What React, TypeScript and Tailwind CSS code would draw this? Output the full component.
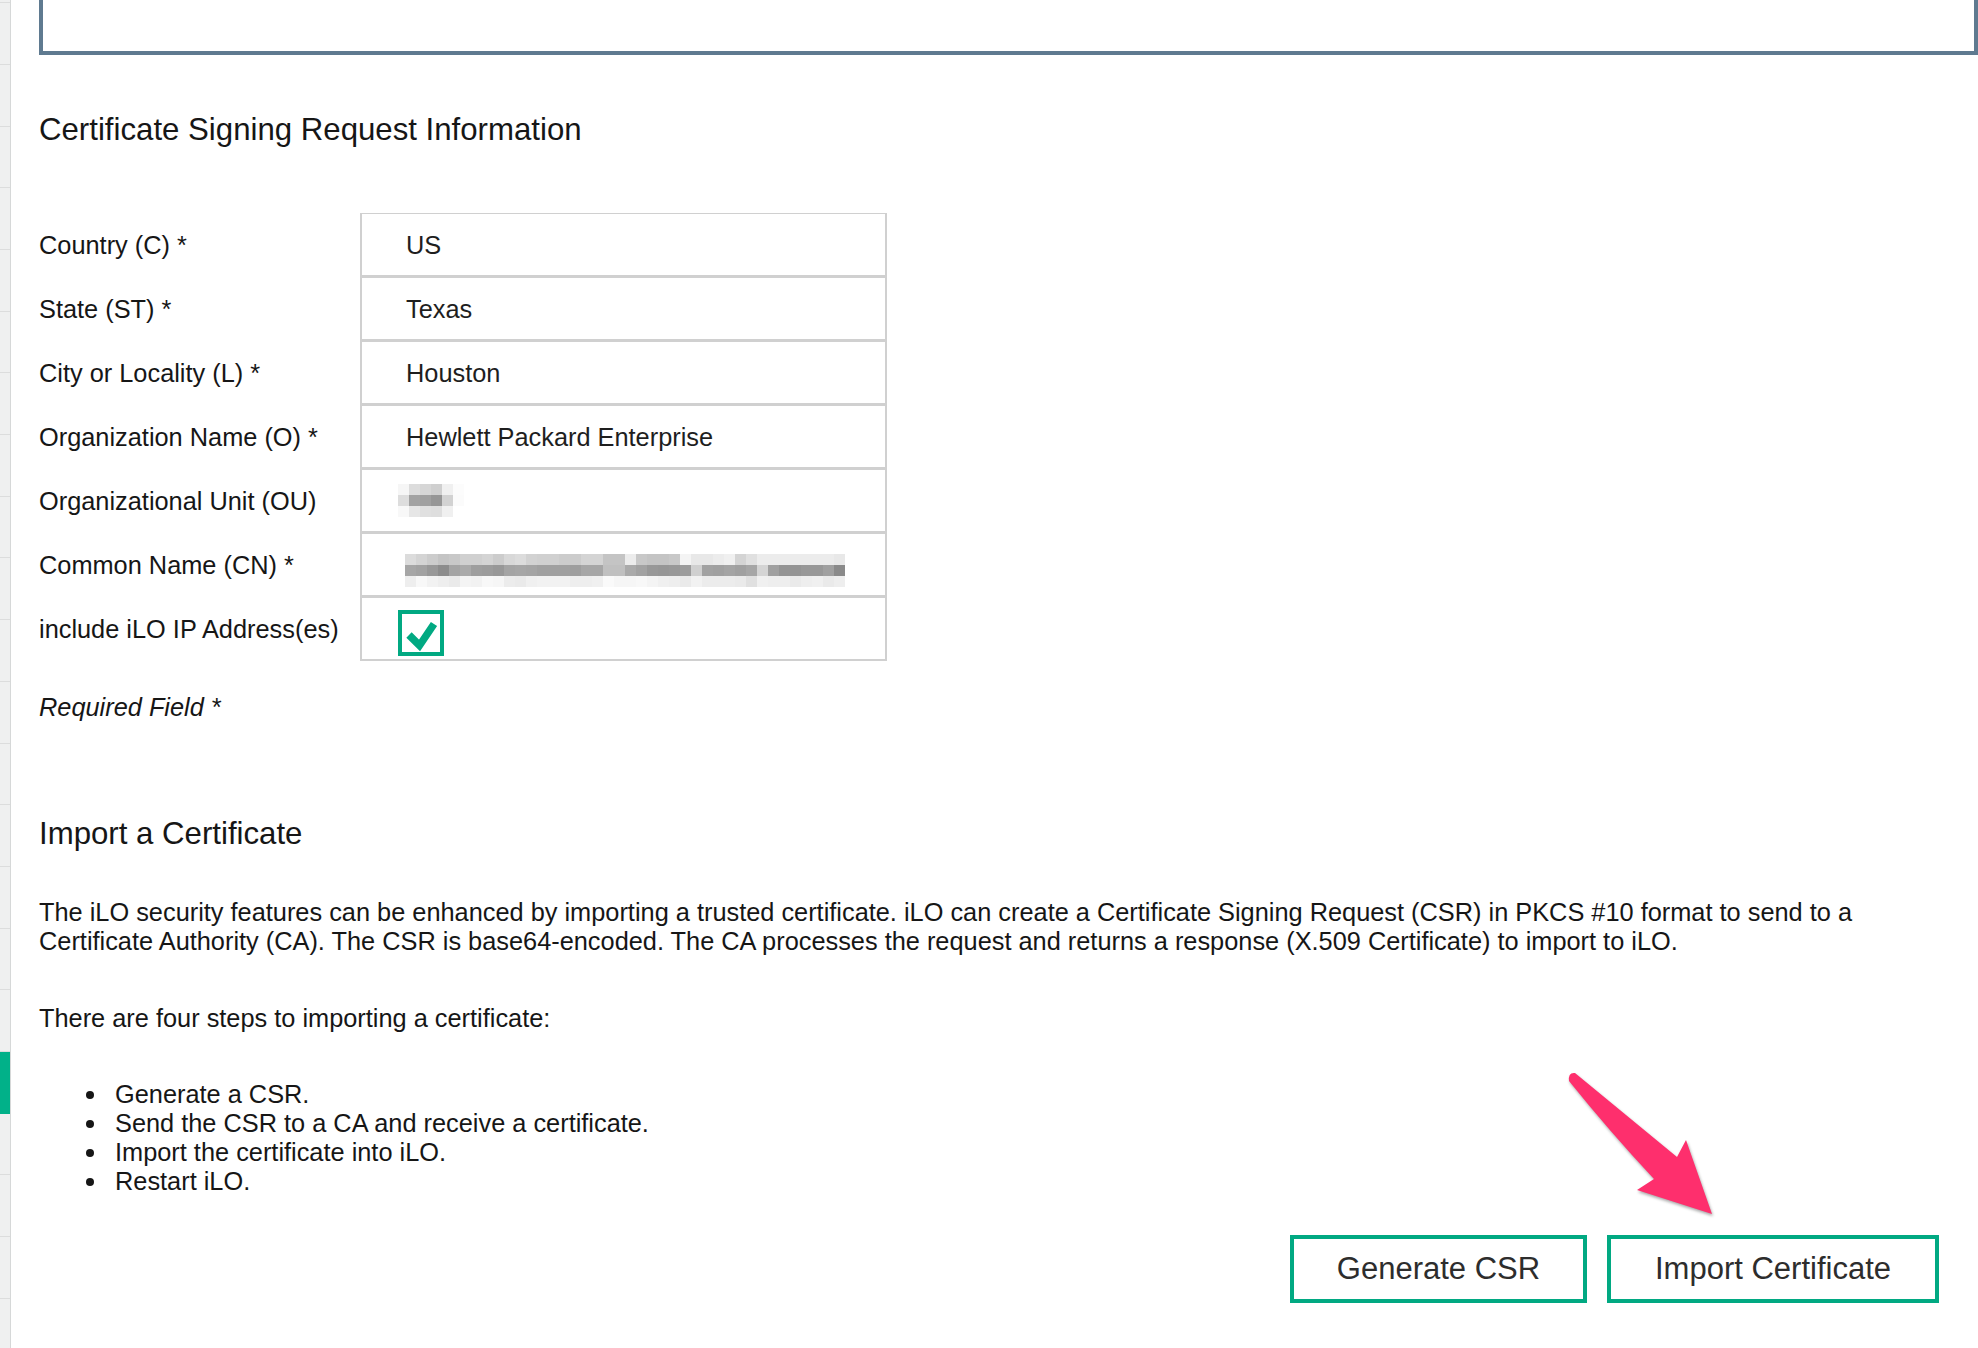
import React from "react";

// form rows for the CSR table
const fields = [
  { label: "Country (C) *", value: "US" },
  { label: "State (ST) *", value: "Texas" },
  { label: "City or Locality (L) *", value: "Houston" },
  { label: "Organization Name (O) *", value: "Hewlett Packard Enterprise" },
  { label: "Organizational Unit (OU)", redacted: "ou" },
  { label: "Common Name (CN) *", redacted: "cn" },
  { label: "include iLO IP Address(es)", checkbox: true },
];

const steps = [
  "Generate a CSR.",
  "Send the CSR to a CA and receive a certificate.",
  "Import the certificate into iLO.",
  "Restart iLO.",
];

// pixelated (redacted) values, grey levels per cell
const ouCells = [
  ["f6", "dc", "d6", "cf", "f0", "fc"],
  ["dd", "a2", "a0", "96", "d2", "fb"],
  ["f8", "e6", "e0", "de", "f0", "ff"],
];

const cnCells = [
  "dcd4ccc4c8d0d0d4ccd8dcd2d0d0ccccd4d4c4c4ecc8c4c4c8f4e8e8ecf0d4e0ececececececece8",
  "a6a2988ca4aa9e9c98a4a6a4a0a0a09ea6a6c0c0aaa29896989cd0a2a0a4a0a6d4a094949898a08a",
  "eef8f2eeeaf4f2f8f6eceaf0f2f2f2eeeef0faf6f6f8f4f0eeeaf2ecececeae0f0eeeeeaeef0eaee",
].map((row) => row.match(/.{2}/g) as string[]);

const Pixels = ({ rows }: { rows: string[][] }) => (
  <div className="flex flex-col">
    {rows.map((row, i) => (
      <div key={i} className="flex">
        {row.map((c, j) => (
          <div
            key={j}
            className="h-[11px] w-[11px]"
            style={{ backgroundColor: `#${c}${c}${c}` }}
          />
        ))}
      </div>
    ))}
  </div>
);

const App = () => {
  return (
    <div className="relative flex h-[1348px] w-[1978px] overflow-hidden bg-white font-['Liberation_Sans',Arial,sans-serif] text-[#161616]">
      {/* cropped side navigation */}
      <div className="w-[11px] shrink-0 border-r border-[#d6d8d8] bg-[#eff0f0]">
        <div className="h-[3.3px] border-b border-[#dcdddd]" />
        {Array.from({ length: 22 }).map((_, i) => (
          <div
            key={i}
            className={
              i === 17
                ? "h-[61.7px] bg-[#01b189]"
                : "h-[61.7px] border-b border-[#dcdddd]"
            }
          />
        ))}
      </div>

      <main className="flex-1 pl-[28px]">
        {/* bottom of the panel above */}
        <div className="h-[55px] border-x-4 border-b-4 border-[#5f7a90]" />

        <h2 className="mt-[56.5px] text-[31.2px] leading-[36px]">
          Certificate Signing Request Information
        </h2>

        {/* CSR fields */}
        <div className="mt-[65.75px]">
          {fields.map((f) => (
            <div key={f.label} className="flex h-[64px]">
              <div className="flex w-[321px] items-center text-[25.35px]">
                {f.label}
              </div>
              <div className="flex w-[527px] items-center border-x-2 border-t border-b-2 border-[#d0d0d0] pl-[44px] text-[25.35px] text-[#1e1e1e]">
                {f.value}
                {f.redacted === "ou" && (
                  <div className="-ml-[8px]">
                    <Pixels rows={ouCells} />
                  </div>
                )}
                {f.redacted === "cn" && (
                  <div className="-ml-[1px] mt-[12px]">
                    <Pixels rows={cnCells} />
                  </div>
                )}
                {f.checkbox && (
                  <div className="-ml-[8px] mt-[7.5px] flex h-[46px] w-[46px] items-center justify-center border-4 border-[#01a982]">
                    <svg width="38" height="38" viewBox="0 0 38 38">
                      <polyline
                        points="7,21 17.5,31.5 32,10"
                        fill="none"
                        stroke="#01a982"
                        strokeWidth="7.5"
                        strokeLinejoin="miter"
                      />
                    </svg>
                  </div>
                )}
              </div>
            </div>
          ))}
        </div>

        <p className="mt-[31px] text-[25.35px] italic leading-[30px]">
          Required Field *
        </p>

        <h2 className="mt-[94px] text-[31.2px] leading-[36px]">
          Import a Certificate
        </h2>

        <p className="mt-[45.25px] text-[25.35px] leading-[29px]">
          The iLO security features can be enhanced by importing a trusted
          certificate. iLO can create a Certificate Signing Request (CSR) in
          PKCS #10 format to send to a
          <br />
          Certificate Authority (CA). The CSR is base64-encoded. The CA
          processes the request and returns a response (X.509 Certificate) to
          import to iLO.
        </p>

        <p className="mt-[48.25px] text-[25.35px] leading-[29px]">
          There are four steps to importing a certificate:
        </p>

        <ul className="mt-[47px]">
          {steps.map((s) => (
            <li key={s} className="flex h-[29px] items-center text-[25.35px]">
              <span className="ml-[47px] mr-[21px] mt-[1px] h-[8px] w-[8px] rounded-full bg-[#161616]" />
              {s}
            </li>
          ))}
        </ul>

        <div className="mt-[39px] flex justify-end gap-[20px] pr-[39px]">
          <button className="h-[68px] w-[297px] border-4 border-[#01a982] bg-white text-[31px] text-[#2d2d2d]">
            Generate CSR
          </button>
          <button className="h-[68px] w-[332px] border-4 border-[#01a982] bg-white text-[31px] text-[#2d2d2d]">
            Import Certificate
          </button>
        </div>
      </main>

      {/* annotation arrow */}
      <svg
        className="absolute left-[1560px] top-[1060px] drop-shadow-[1px_2px_1.5px_rgba(0,0,0,0.35)]"
        width="180"
        height="170"
        viewBox="0 0 180 170"
      >
        <path
          d="M15 13 L117 97 L126 80 L152 154 L77 130 L94 119 Q50 72 9 21 Q8 12 15 13 Z"
          fill="#fe2f6d"
        />
      </svg>
    </div>
  );
};

export default App;
